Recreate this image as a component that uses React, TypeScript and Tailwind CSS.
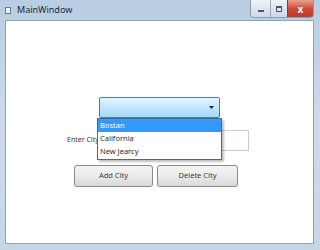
import React from 'react';

const font = { fontFamily: '"Noto Sans", "Open Sans", "DejaVu Sans", sans-serif' };

const TitleBar: React.FC = () => (
  <div className="flex h-[20px] items-start">
    <div className="ml-[5px] mt-[7px] h-[7px] w-[6px] border border-[#6b7d93] bg-[#eef3f8]"></div>
    <div className="ml-[6px] mt-[3px] text-[9px] leading-[14px] text-[#1e2a36]">MainWindow</div>
    <div className="ml-auto mr-[6px] flex h-[18px] overflow-hidden rounded-b-[4px] border border-t-0 border-[#8c9db1]">
      <div className="flex w-[19px] items-center justify-center bg-gradient-to-b from-[#eef3f8] to-[#cdd9e6]">
        <div className="mt-[4px] h-[2px] w-[6px] bg-[#4a5869]"></div>
      </div>
      <div className="flex w-[17px] items-center justify-center border-l border-[#9aaabc] bg-gradient-to-b from-[#eef3f8] to-[#cdd9e6]">
        <div className="h-[6px] w-[6px] border border-t-2 border-[#4a5869]"></div>
      </div>
      <div className="flex w-[26px] items-center justify-center border-l border-[#8a3a30] bg-gradient-to-b from-[#e8a092] via-[#cf4b3c] to-[#c0392b] text-[10px] font-bold leading-none text-white">
        x
      </div>
    </div>
  </div>
);

const App: React.FC = () => {
  return (
    <div
      className="relative h-[250px] w-[320px] overflow-hidden bg-gradient-to-b from-[#b9cde3] via-[#cddbe9] to-[#c6d6e6]"
      style={font}
    >
      <TitleBar />
      <div className="mx-[5px] h-[224px] w-[309px] border border-[#8ea2b8] bg-white">
        <div className="ml-[93px] mt-[76px] flex h-[21px] w-[121px] items-center justify-end rounded-[2px] border border-[#3c7fb1] bg-gradient-to-b from-[#eaf6fd] via-[#bee6fd] to-[#a7d9f5] pr-[5px]">
          <svg width="5" height="3" viewBox="0 0 5 3">
            <path d="M0 0 L5 0 L2.5 3 Z" fill="#1f2a36" />
          </svg>
        </div>
        <div className="mt-[12px] flex h-[21px] items-center">
          <div className="ml-[61px] w-[49px] whitespace-nowrap text-[7px] text-[#3a3a3a]">Enter City</div>
          <div className="ml-[1px] h-[21px] w-[132px] border border-[#c7cdd4] bg-white"></div>
        </div>
        <div className="ml-[68px] mt-[14px] flex gap-[4px]">
          <button className="h-[22px] w-[79px] rounded-[3px] border border-[#8a8a8a] bg-gradient-to-b from-[#f4f4f4] via-[#ebebeb] to-[#d8d8d8] text-[7.5px] text-[#3a3a3a]">
            Add City
          </button>
          <button className="h-[22px] w-[81px] rounded-[3px] border border-[#8a8a8a] bg-gradient-to-b from-[#f4f4f4] via-[#ebebeb] to-[#d8d8d8] text-[7.5px] text-[#3a3a3a]">
            Delete City
          </button>
        </div>
      </div>
      <div className="absolute left-[97px] top-[118px] w-[125px] border border-[#646464] bg-white text-[7.5px] leading-[11px] text-[#2e2e2e] shadow-[2px_2px_2px_rgba(0,0,0,0.25)]">
        <div className="bg-[#3399ff] px-[2px] py-[1px] text-white">Bostan</div>
        <div className="px-[2px] py-[1px]">California</div>
        <div className="px-[2px] py-[1px] pb-[2px]">New Jearcy</div>
      </div>
    </div>
  );
};

export default App;
